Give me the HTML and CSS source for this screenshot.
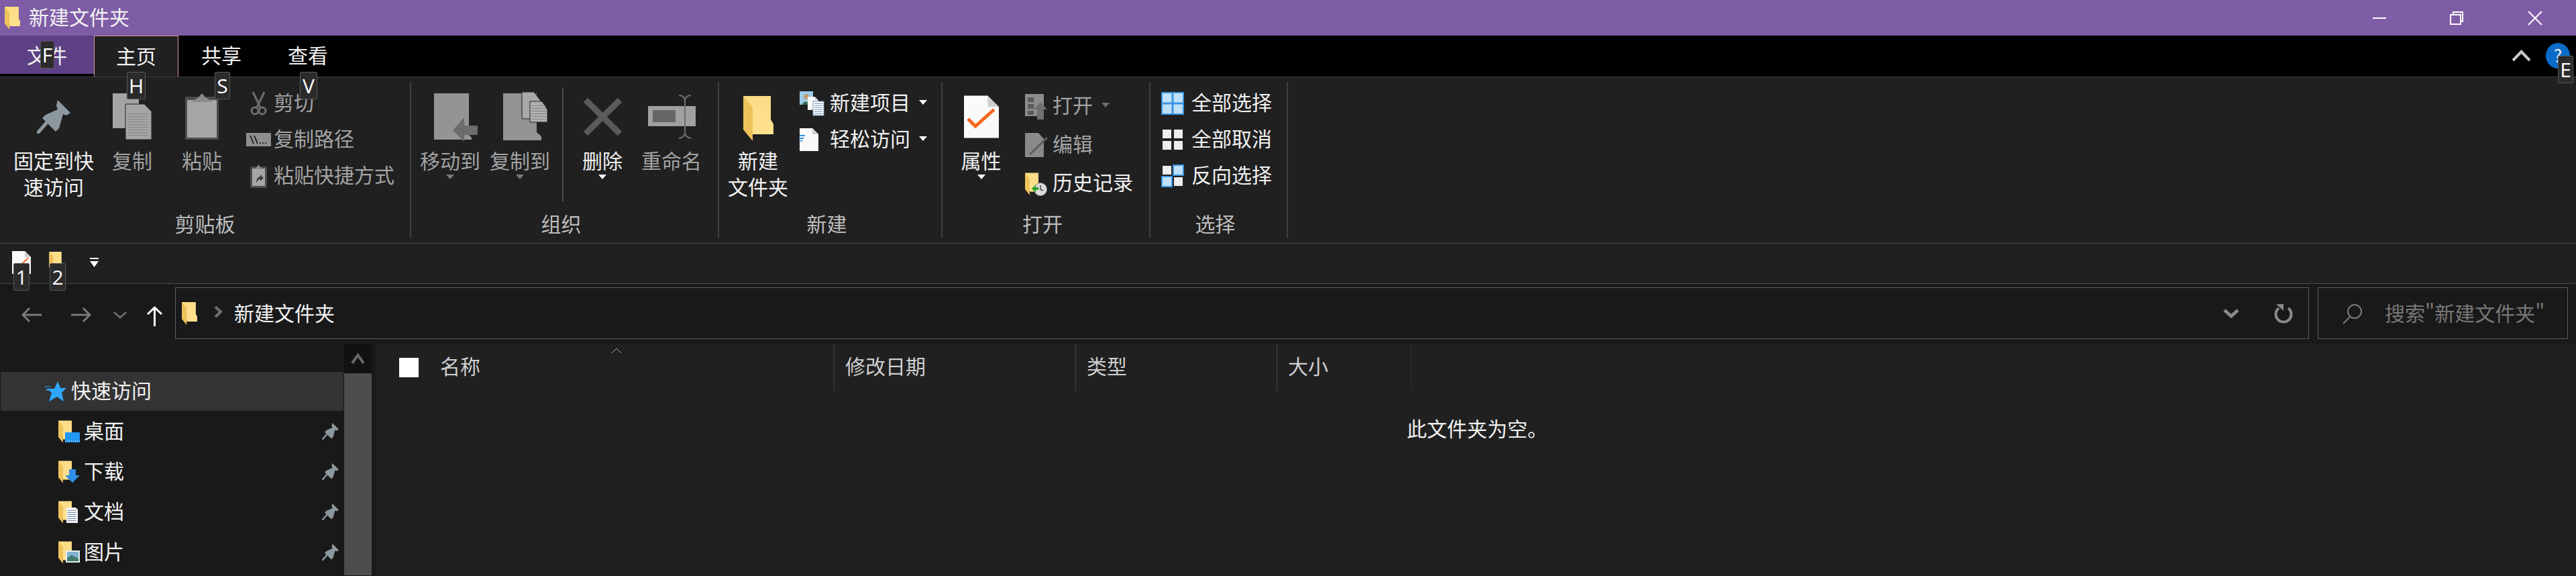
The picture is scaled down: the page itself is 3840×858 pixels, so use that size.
FILE: index.html
```html
<!DOCTYPE html>
<html lang="zh-CN">
<head>
  <meta charset="UTF-8">
  <title>新建文件夹</title>
  <link rel="stylesheet" href="styles.css">
</head>
<body>
<div class="app">
  <svg class="defs" width="0" height="0">
    <defs>
      <linearGradient id="folderFill" x1="0" y1="0" x2="0" y2="1">
        <stop offset="0" stop-color="#fbdc86"/>
        <stop offset="1" stop-color="#ffe18e"/>
      </linearGradient>
      <symbol id="folder" viewBox="0 0 45 67">
        <path d="M0 0H41V35L45 42V57H14V50H0Z" fill="url(#folderFill)"/>
        <path d="M0 0L14 17V67L0 50Z" fill="#eec25a"/>
      </symbol>
      <symbol id="pin" viewBox="0 0 50 50">
        <path d="M31 0L50 19 44 23 39 21 33 42 28 47 8 27 13 22 31 14 29 8Z" fill="#8c989f"/>
        <path d="M2 48L17 31" stroke="#8c989f" stroke-width="5" stroke-linecap="round"/>
      </symbol>
      <symbol id="page" viewBox="0 0 28 34">
        <path d="M0 0H19L28 9V34H0Z" fill="#fafafa"/>
        <path d="M19 0L28 9H19Z" fill="#cfcfcf"/>
      </symbol>
    </defs>
  </svg>

  <header class="titlebar">
    <svg class="title-folder" width="23" height="34"><use href="#folder"/></svg>
    <span class="title-text">新建文件夹</span>
    <div class="window-btns">
      <svg width="20" height="20" viewBox="0 0 20 20"><path d="M0 10H20" stroke="#fff" stroke-width="2"/></svg>
      <svg width="20" height="20" viewBox="0 0 20 20" fill="none" stroke="#fff" stroke-width="2"><path d="M5 4V1H19V15H16"/><rect x="1" y="5" width="15" height="14"/></svg>
      <svg width="20" height="20" viewBox="0 0 20 20"><path d="M0 0L20 20M20 0L0 20" stroke="#fff" stroke-width="2"/></svg>
    </div>
  </header>

  <nav class="tabs">
    <div class="tab tab-file">文件</div>
    <div class="tab tab-home">主页</div>
    <div class="tab tab-share">共享</div>
    <div class="tab tab-view">查看</div>
    <svg class="collapse" width="29" height="18" viewBox="0 0 29 18"><path d="M2 16L14.500 3 27 16" fill="none" stroke="#c8c8c8" stroke-width="4"/></svg>
    <div class="help">?</div>
  </nav>

  <section class="ribbon">
    <div class="group group-clipboard">
      <div class="group-body">
        <div class="large large-pin">
          <svg class="lg-icon" width="50" height="86" viewBox="0 0 50 86"><use href="#pin" x="0" y="12" width="50" height="50"/></svg>
          <span>固定到快<br>速访问</span>
        </div>
        <div class="large off large-copy">
          <svg class="lg-icon" width="58" height="86" viewBox="0 0 58 86">
            <rect y="2" width="39" height="52" fill="#a4a4a4"/>
            <path d="M19 18H47L58 29V71H19Z" fill="#a4a4a4" stroke="#202020" stroke-width="1"/>
            <path d="M38 32V68" stroke="#8a8a8a" stroke-width="30" stroke-dasharray="1 3"/>
          </svg>
          <span>复制</span>
        </div>
        <div class="large off large-paste">
          <svg class="lg-icon" width="50" height="86" viewBox="0 0 50 86">
            <rect y="7" width="50" height="64" fill="#4c4c4c"/>
            <rect x="3" y="12" width="44" height="56" fill="#a6a6a6"/>
            <path d="M25 2L30 8 42 15H8L20 8Z" fill="#8a8a8a"/>
          </svg>
          <span>粘贴</span>
        </div>
        <div class="small-col">
          <div class="small off"><span class="sm-icon">
            <svg width="25" height="35" viewBox="0 0 25 35" fill="none" stroke="#6e6e6e" stroke-width="3"><path d="M4 0L15 23M21 0L10 23"/><circle cx="7" cy="28" r="5"/><circle cx="18" cy="28" r="5"/></svg>
          </span><span class="txt">剪切</span></div>
          <div class="small off"><span class="sm-icon">
            <svg width="37" height="20" viewBox="0 0 37 20"><rect width="37" height="20" fill="#8f8f8f"/><path d="M6 4L11 16M12 4L17 16" stroke="#2a2a2a" stroke-width="2"/><path d="M20 15H32" stroke="#2a2a2a" stroke-width="2" stroke-dasharray="2 2"/></svg>
          </span><span class="txt">复制路径</span></div>
          <div class="small off"><span class="sm-icon">
            <svg width="25" height="35" viewBox="0 0 25 35"><rect y="3" width="25" height="32" rx="2" fill="#4c4c4c"/><rect x="3" y="6" width="19" height="26" fill="#a6a6a6"/><path d="M12 0L15 4 20 7H5L10 4Z" fill="#8a8a8a"/><path d="M9 28C9 21 12 18 15 18V15L20 20 15 25V22C12 22 11 24 9 28Z" fill="#3c3c3c"/></svg>
          </span><span class="txt">粘贴快捷方式</span></div>
        </div>
      </div>
      <div class="group-label">剪贴板</div>
    </div>

    <div class="group group-organize">
      <div class="group-body">
        <div class="large off large-move">
          <svg class="lg-icon lg-shift" width="65" height="86" viewBox="0 0 65 86">
            <path d="M0 2H52V64L56 68V71H0Z" fill="#949494"/>
            <path d="M28 57L45 38V50H65V64H45V74Z" fill="#6c6c6c"/>
          </svg>
          <span>移动到</span>
          <i class="caret"></i>
        </div>
        <div class="large off large-copyto">
          <svg class="lg-icon lg-shift" width="66" height="86" viewBox="0 0 66 86">
            <path d="M0 2H50V60L57 66V72H0Z" fill="#939393"/>
            <path d="M28 0H46L58 16V40H28Z" fill="#a8a8a8" stroke="#202020"/>
            <path d="M40 14H58L66 26V45H40Z" fill="#b0b0b0" stroke="#202020"/>
            <path d="M53 20V44" stroke="#868686" stroke-width="22" stroke-dasharray="1 3"/>
          </svg>
          <span>复制到</span>
          <i class="caret"></i>
        </div>
        <div class="inner-sep"></div>
        <div class="large large-delete">
          <svg class="lg-icon" width="57" height="86" viewBox="0 0 57 86"><path d="M3 12L54 62M54 12L3 62" stroke="#5a5a5a" stroke-width="9"/></svg>
          <span>删除</span>
          <i class="caret"></i>
        </div>
        <div class="large off large-rename">
          <svg class="lg-icon" width="71" height="86" viewBox="0 0 71 86">
            <rect y="21" width="71" height="30" fill="#a0a0a0"/>
            <rect x="7" y="27" width="34" height="18" fill="#666"/>
            <path d="M46 5C52 5 55 8 55 14V60C55 65 52 68 46 69M64 5C58 5 55 8 55 14M55 60C55 65 58 68 64 69" fill="none" stroke="#6e6e6e" stroke-width="2"/>
          </svg>
          <span>重命名</span>
        </div>
      </div>
      <div class="group-label">组织</div>
    </div>

    <div class="group group-new">
      <div class="group-body">
        <div class="large large-newfolder">
          <svg class="lg-icon" width="45" height="86" viewBox="0 0 45 86"><use href="#folder" y="6" width="45" height="67"/></svg>
          <span>新建<br>文件夹</span>
        </div>
        <div class="small-col">
          <div class="small"><span class="sm-icon">
            <svg width="36" height="36" viewBox="0 0 36 36">
              <rect width="20" height="20" fill="#9ccbec"/>
              <circle cx="10" cy="8" r="4" fill="#c49a6c"/><path d="M4 20C4 14 16 14 16 20Z" fill="#3c6e4a"/>
              <use href="#page" x="12" y="8" width="16" height="20"/>
              <rect x="20" y="15" width="16" height="21" fill="#fff" stroke="#6f8fb5"/>
              <path d="M28 18V34" stroke="#6f8fb5" stroke-width="12" stroke-dasharray="1 2"/>
            </svg>
          </span><span class="txt">新建项目</span><i class="caret caret-side"></i></div>
          <div class="small"><span class="sm-icon">
            <svg width="28" height="34" viewBox="0 0 28 34"><use href="#page" width="28" height="34"/><path d="M0 11H8M-1 15H6M1 19H4" stroke="#2c8fe0" stroke-width="2"/></svg>
          </span><span class="txt">轻松访问</span><i class="caret caret-side"></i></div>
        </div>
      </div>
      <div class="group-label">新建</div>
    </div>

    <div class="group group-open">
      <div class="group-body">
        <div class="large large-props">
          <svg class="lg-icon" width="52" height="86" viewBox="0 0 52 86">
            <use href="#page" y="2" width="52" height="70" preserveAspectRatio="none"/>
            <path d="M6 40L17 51 45 26" fill="none" stroke="#f7671f" stroke-width="5"/>
          </svg>
          <span>属性</span>
          <i class="caret"></i>
        </div>
        <div class="small-col small-col-wide">
          <div class="small off"><span class="sm-icon">
            <svg width="33" height="38" viewBox="0 0 33 38">
              <rect width="28" height="33" fill="#8c8c8c"/>
              <path d="M4 5H13V12H4ZM4 15H13V22H4ZM4 25H13V31H4Z" fill="#5a5a5a"/>
              <path d="M23 12L33 23H28V38H18V23H13Z" fill="#707070"/>
            </svg>
          </span><span class="txt">打开</span><i class="caret caret-side caret-dim"></i></div>
          <div class="small off"><span class="sm-icon">
            <svg width="33" height="36" viewBox="0 0 33 36">
              <path d="M0 0H20L28 9V36H0Z" fill="#8a8a8a"/>
              <path d="M7 32L33 7" stroke="#5e5e5e" stroke-width="3"/>
            </svg>
          </span><span class="txt">编辑</span></div>
          <div class="small"><span class="sm-icon">
            <svg width="33" height="36" viewBox="0 0 33 36">
              <use href="#folder" width="22" height="36" preserveAspectRatio="none"/>
              <circle cx="23" cy="26" r="9.500" fill="#dcdcdc" stroke="#8a8a8a"/>
              <path d="M23 20V26L27 28" fill="none" stroke="#444" stroke-width="1.500"/>
              <path d="M10 25L16 19V23H20V27H16V31Z" fill="#2fa52f"/>
            </svg>
          </span><span class="txt">历史记录</span></div>
        </div>
      </div>
      <div class="group-label">打开</div>
    </div>

    <div class="group group-select">
      <div class="group-body">
        <div class="small-col">
          <div class="small"><span class="sm-icon">
            <svg width="34" height="34" viewBox="0 0 34 34"><rect width="34" height="34" fill="#3a95e0"/><path d="M2 2H15.500V15.500H2ZM18.500 2H32V15.500H18.500ZM2 18.500H15.500V32H2ZM18.500 18.500H32V32H18.500Z" fill="#bfe0fa"/></svg>
          </span><span class="txt">全部选择</span></div>
          <div class="small"><span class="sm-icon">
            <svg width="30" height="30" viewBox="0 0 30 30"><path d="M0 0H13V13H0ZM17 0H30V13H17ZM0 17H13V30H0ZM17 17H30V30H17Z" fill="#ededed"/></svg>
          </span><span class="txt">全部取消</span></div>
          <div class="small"><span class="sm-icon">
            <svg width="34" height="34" viewBox="0 0 34 34"><path d="M2 2H15V15H2ZM19 19H32V32H19Z" fill="#ededed"/><path d="M17 0H34V17H17ZM0 17H17V34H0Z" fill="#3a95e0"/><path d="M19 2H32V15H19ZM2 19H15V32H2Z" fill="#bfe0fa"/></svg>
          </span><span class="txt">反向选择</span></div>
        </div>
      </div>
      <div class="group-label">选择</div>
    </div>
  </section>

  <div class="qat">
    <svg class="qat-doc" width="28" height="36" viewBox="0 0 28 36"><use href="#page" width="28" height="36" preserveAspectRatio="none"/><path d="M13 22L24 11" stroke="#f7671f" stroke-width="2"/></svg>
    <svg class="qat-folder" width="21" height="30"><use href="#folder" width="21" height="30"/></svg>
    <svg class="qat-more" width="13" height="14" viewBox="0 0 13 14"><path d="M0 1H13" stroke="#fff" stroke-width="2"/><path d="M0 5H13L6.500 14Z" fill="#fff"/></svg>
  </div>

  <div class="navbar">
    <svg class="nav-back" width="30" height="22" viewBox="0 0 30 22" fill="none" stroke="#7a7a7a" stroke-width="3"><path d="M30 11H2M12 1L2 11 12 21"/></svg>
    <svg class="nav-forward" width="30" height="22" viewBox="0 0 30 22" fill="none" stroke="#7a7a7a" stroke-width="3"><path d="M0 11H28M18 1L28 11 18 21"/></svg>
    <svg class="nav-recent" width="20" height="11" viewBox="0 0 20 11" fill="none" stroke="#6a6a6a" stroke-width="3"><path d="M1 1L10 9 19 1"/></svg>
    <svg class="nav-up" width="23" height="30" viewBox="0 0 23 30" fill="none" stroke="#fff" stroke-width="3"><path d="M11.500 30V2M1 12L11.500 2 22 12"/></svg>
    <div class="address">
      <svg class="addr-folder" width="23" height="34"><use href="#folder" width="23" height="34"/></svg>
      <svg class="addr-sep" width="12" height="17" viewBox="0 0 12 17" fill="none" stroke="#6e6e6e" stroke-width="4"><path d="M2 1L10 8.500 2 16"/></svg>
      <span class="addr-text">新建文件夹</span>
      <svg class="addr-drop" width="24" height="14" viewBox="0 0 24 14" fill="none" stroke="#8a8a8a" stroke-width="5"><path d="M2 2L12 11 22 2"/></svg>
      <div class="addr-refresh">
        <svg width="28" height="28" viewBox="0 0 28 28" fill="none" stroke="#8a8a8a" stroke-width="4"><path d="M7 6A11.500 11.500 0 1 0 21 6"/><path d="M3 0H14V10Z" fill="#8a8a8a" stroke="none"/></svg>
      </div>
    </div>
    <div class="search">
      <svg width="30" height="30" viewBox="0 0 30 30" fill="none" stroke="#7a7a7a" stroke-width="2"><circle cx="18" cy="12" r="10"/><path d="M11 20L1 30"/></svg>
      <span class="search-text">搜索"新建文件夹"</span>
    </div>
  </div>

  <div class="content">
    <aside class="sidebar">
      <div class="tree">
        <div class="row row-selected">
          <svg class="star" width="32" height="30" viewBox="0 0 32 30"><path d="M19 0L23 10H32L25 17 28 30 18 23 6 30 10 17 2 11H14Z" fill="#2ea6fb"/><path d="M0 8H8M1 13H6" stroke="#2ea6fb"/></svg>
          <span class="txt">快速访问</span>
        </div>
        <div class="row">
          <svg class="row-icon" width="32" height="34" viewBox="0 0 32 34"><use href="#folder" width="22" height="34" preserveAspectRatio="none"/><rect x="10" y="18" width="22" height="15" fill="#2196f3"/><path d="M10 31H32" stroke="#fff" stroke-dasharray="1 2"/></svg>
          <span class="txt">桌面</span>
          <svg class="row-pin" width="25" height="25"><use href="#pin" width="25" height="25"/></svg>
        </div>
        <div class="row">
          <svg class="row-icon" width="32" height="34" viewBox="0 0 32 34"><use href="#folder" width="22" height="34" preserveAspectRatio="none"/><path d="M16 13H26V22H32L21 33 10 22H16Z" fill="#2f8fe6"/></svg>
          <span class="txt">下载</span>
          <svg class="row-pin" width="25" height="25"><use href="#pin" width="25" height="25"/></svg>
        </div>
        <div class="row">
          <svg class="row-icon" width="32" height="34" viewBox="0 0 32 34"><use href="#folder" width="22" height="34" preserveAspectRatio="none"/><path d="M12 10H26L29 13V33H12Z" fill="#f3f3f3"/><path d="M20 14V31" stroke="#6f8fb5" stroke-width="13" stroke-dasharray="1 2"/></svg>
          <span class="txt">文档</span>
          <svg class="row-pin" width="25" height="25"><use href="#pin" width="25" height="25"/></svg>
        </div>
        <div class="row">
          <svg class="row-icon" width="32" height="34" viewBox="0 0 32 34"><use href="#folder" width="22" height="34" preserveAspectRatio="none"/><rect x="11" y="14" width="21" height="18" fill="#e8eef2"/><rect x="13" y="16" width="17" height="14" fill="#7fb2cf"/><path d="M13 25L20 21 30 26V30H13Z" fill="#3f7a6a"/></svg>
          <span class="txt">图片</span>
          <svg class="row-pin" width="25" height="25"><use href="#pin" width="25" height="25"/></svg>
        </div>
      </div>
      <div class="scrollbar">
        <div class="scroll-up">
          <svg width="19" height="17" viewBox="0 0 19 17" fill="none" stroke="#666" stroke-width="4"><path d="M1 15L9.500 3 18 15"/></svg>
        </div>
        <div class="scroll-thumb"></div>
      </div>
    </aside>

    <main class="files">
      <div class="file-head">
        <div class="col col-name">
          <span class="checkbox"></span>
          <span class="txt">名称</span>
          <svg class="sort" width="16" height="8" viewBox="0 0 16 8" fill="none" stroke="#b0b0b0"><path d="M1 8L8 1 15 8"/></svg>
        </div>
        <div class="col col-date"><span class="txt">修改日期</span></div>
        <div class="col col-type"><span class="txt">类型</span></div>
        <div class="col col-size"><span class="txt">大小</span></div>
      </div>
      <p class="empty">此文件夹为空。</p>
    </main>
  </div>

  <span class="keytip tip-f">F</span>
  <span class="keytip tip-h">H</span>
  <span class="keytip tip-s">S</span>
  <span class="keytip tip-v">V</span>
  <span class="keytip tip-e">E</span>
  <span class="keytip tip-1">1</span>
  <span class="keytip tip-2">2</span>
</div>
</body>
</html>
```
FILE: styles.css
```css
html, body {
  margin: 0;
  padding: 0;
  height: 858px;
  overflow: hidden;
  background-color: #191919;
}

p {
  margin: 0;
}

.defs {
  position: absolute;
}

.app {
  position: relative;
  width: 3840px;
  height: 858px;
  overflow: hidden;
  font-family: "Noto Sans CJK SC", "Liberation Sans", sans-serif;
  font-size: 30px;
  line-height: 38px;
  color: #f2f2f2;
}

svg {
  display: block;
  flex: none;
  overflow: visible;
}

/* Noto sits lower in its line box than the original font */
.txt {
  margin-bottom: 7px;
}

/* title bar */
.titlebar {
  height: 53px;
  display: flex;
  align-items: center;
  padding-left: 7px;
  background-color: #7e5ca6;
}

.title-text {
  margin: 0 0 5px 13px;
}

.window-btns {
  margin-left: auto;
  display: flex;
  gap: 95px;
  padding-right: 51px;
}

.window-btns svg:last-child {
  margin-left: 2px;
}

/* tabs */
.tabs {
  height: 61px;
  display: flex;
  background-color: #000;
}

.tab {
  height: 61px;
  box-sizing: border-box;
  padding-top: 9px;
  text-align: center;
}

.tab-file {
  width: 140px;
  height: 57px;
  background-color: #5d4085;
}

.tab-home {
  width: 126px;
  background-color: #202020;
  border: 1px solid #e09a9a;
  border-bottom: none;
}

.tab-share {
  width: 128px;
}

.tab-view {
  width: 130px;
}

.collapse {
  margin: 21px 0 0 3220px;
}

.help {
  width: 36px;
  height: 38px;
  margin: 11px 0 0 22px;
  border-radius: 50%;
  background-color: #0a6cc8;
  font-size: 26px;
  line-height: 36px;
  text-align: center;
}

/* ribbon */
.ribbon {
  height: 249px;
  box-sizing: border-box;
  display: flex;
  padding-top: 7px;
  background-color: #202020;
  border-top: 1px solid #3c3c3c;
  border-bottom: 1px solid #4a4a4a;
}

.group {
  height: 233px;
  box-sizing: border-box;
  display: flex;
  flex-direction: column;
  border-right: 2px solid #3e3e3e;
}

.group-clipboard { width: 613px; padding-left: 14px; }
.group-organize { width: 459px; padding-left: 7px; }
.group-new { width: 333px; padding-left: 8px; }
.group-open { width: 310px; padding-left: 10px; }
.group-select { width: 205px; padding-left: 8px; }

.group-body {
  flex: 1;
  display: flex;
}

.group-label {
  height: 38px;
  padding: 0 10px 4px 0;
  text-align: center;
  color: #bdbdbd;
}

.group-clipboard .group-label { margin-left: -14px; padding-right: 0; }
.group-organize .group-label { margin-left: -7px; }
.group-new .group-label { margin-left: -8px; }
.group-open .group-label { margin-left: -10px; }
.group-select .group-label { margin-left: -8px; }

.large {
  display: flex;
  flex-direction: column;
  align-items: center;
  padding-top: 15px;
  line-height: 39px;
  text-align: center;
}

.large-pin { width: 132px; }
.large-copy { width: 102px; }
.large-paste { width: 106px; }
.large-move { width: 102px; }
.large-copyto { width: 106px; }
.large-delete { width: 116px; }
.large-rename { width: 90px; }
.large-newfolder { width: 100px; }
.large-props { width: 95px; }

.lg-icon {
  height: 86px;
  margin-bottom: -4px;
}

.lg-shift {
  margin-left: 16px;
}

.off {
  color: #a3a3a3;
}

.caret {
  display: block;
  width: 0;
  height: 0;
  margin-top: 2px;
  border-left: 6px solid transparent;
  border-right: 6px solid transparent;
  border-top: 7px solid #fff;
}

.off .caret {
  border-top-color: #7a7a7a;
}

.caret-side {
  margin: 0 0 4px 13px;
}

.off .caret-dim {
  border-top-color: #6e6e6e;
}

.inner-sep {
  width: 2px;
  height: 169px;
  margin: 9px 0 0 10px;
  background-color: #4a4a4a;
}

.small-col {
  margin: 5px 0 0 8px;
}

.group-select .small-col {
  margin-left: 0;
}

.small {
  height: 54px;
  display: flex;
  align-items: center;
}

.small-col-wide {
  margin: 8px 0 0 10px;
}

.small-col-wide .small {
  height: 57.500px;
}

.sm-icon {
  width: 46px;
  display: flex;
  justify-content: center;
}

.group-new .sm-icon,
.group-open .sm-icon {
  width: 49px;
  box-sizing: border-box;
  justify-content: flex-start;
  padding-left: 4px;
}

.group-open .sm-icon {
  padding-left: 8px;
}

.group-select .sm-icon {
  width: 53px;
  padding-left: 8px;
  box-sizing: border-box;
  justify-content: flex-start;
}

.group-select .small:nth-child(2) svg {
  margin-left: 2px;
}

/* quick access toolbar */
.qat {
  height: 60px;
  box-sizing: border-box;
  display: flex;
  padding: 10px 0 0 18px;
  background-color: #202020;
  border-bottom: 1px solid #4a4a4a;
}

.qat-folder {
  margin: 2px 0 0 27px;
}

.qat-more {
  margin: 11px 0 0 40px;
}

/* address row */
.navbar {
  height: 89px;
  box-sizing: border-box;
  display: flex;
  padding: 5px 12px 7px 32px;
  background-color: #191919;
}

.nav-back { margin-top: 30px; }
.nav-forward { margin: 30px 0 0 44px; }
.nav-recent { margin: 36px 0 0 33px; }
.nav-up { margin: 28px 0 0 30px; }

.address {
  flex: 1;
  display: flex;
  align-items: center;
  margin-left: 19px;
  box-sizing: border-box;
  border: 1px solid #5c5c5c;
  padding-left: 9px;
}

.addr-sep {
  margin: -4px 0 0 25px;
}

.addr-text {
  margin: 0 0 4px 18px;
}

.addr-drop {
  margin-left: auto;
}

.addr-refresh {
  height: 100%;
  margin-left: 27px;
  padding: 0 23px 0 24px;
  display: flex;
  align-items: center;
  border-left: 1px solid #202020;
}

.search {
  width: 373px;
  box-sizing: border-box;
  display: flex;
  align-items: center;
  gap: 33px;
  margin-left: 13px;
  padding-left: 36px;
  border: 1px solid #5c5c5c;
  color: #777;
}

.search-text {
  margin-bottom: 4px;
}

/* tree and file list */
.content {
  height: 345px;
  display: flex;
  overflow: hidden;
}

.sidebar {
  width: 560px;
  flex: none;
  display: flex;
  background-color: #191919;
}

.tree {
  width: 513px;
  padding-top: 42px;
}

.row {
  width: 511px;
  height: 60px;
  margin-left: 1px;
  display: flex;
  align-items: center;
  padding-left: 86px;
  box-sizing: border-box;
}

.row-selected {
  height: 58px;
  margin-bottom: 1px;
  padding-left: 66px;
  background-color: #333;
}

.star {
  margin-right: 7px;
}

.row-icon {
  margin-right: 6px;
}

.row-pin {
  margin: 0 7px 1px auto;
}

.scrollbar {
  width: 41px;
  display: flex;
  flex-direction: column;
}

.scroll-up {
  height: 44px;
  flex: none;
  display: flex;
  align-items: center;
  justify-content: center;
  background-color: #111;
}

.scroll-thumb {
  flex: 1;
  background-color: #4d4d4d;
}

.files {
  flex: 1;
  background-color: #202020;
}

.file-head {
  height: 70px;
  display: flex;
  color: #cfcfcf;
}

.col {
  box-sizing: border-box;
  display: flex;
  align-items: center;
  border-right: 1px solid #444;
  padding-left: 16px;
}

.col-name {
  width: 684px;
  padding-left: 35px;
}

.col-date { width: 360px; }
.col-type { width: 300px; }

.col-size {
  width: 200px;
  border-right-color: #2c2c2c;
}

.checkbox {
  width: 29px;
  height: 29px;
  margin-right: 32px;
  background-color: #fff;
}

.sort {
  align-self: flex-start;
  margin: 6px 0 0 195px;
}

.empty {
  margin: 36px 0 0 1537px;
}

/* alt key hints, drawn over the ribbon */
.keytip {
  position: absolute;
  box-sizing: border-box;
  display: flex;
  align-items: center;
  justify-content: center;
  background-color: #2b2b2b;
  border: 1px solid #565656;
  border-radius: 2px;
  color: #fff;
  font-family: "Open Sans", sans-serif;
  font-size: 30px;
  line-height: 1;
}

.tip-f { left: 60px; top: 61px; width: 21px; height: 41px; }
.tip-h { left: 189px; top: 107px; width: 28px; height: 41px; }
.tip-s { left: 320px; top: 107px; width: 23px; height: 41px; }
.tip-v { left: 447px; top: 107px; width: 26px; height: 41px; }
.tip-e { left: 3813px; top: 83px; width: 23px; height: 41px; }
.tip-1 { left: 20px; top: 392px; width: 24px; height: 41px; }
.tip-2 { left: 74px; top: 392px; width: 24px; height: 41px; }
```
